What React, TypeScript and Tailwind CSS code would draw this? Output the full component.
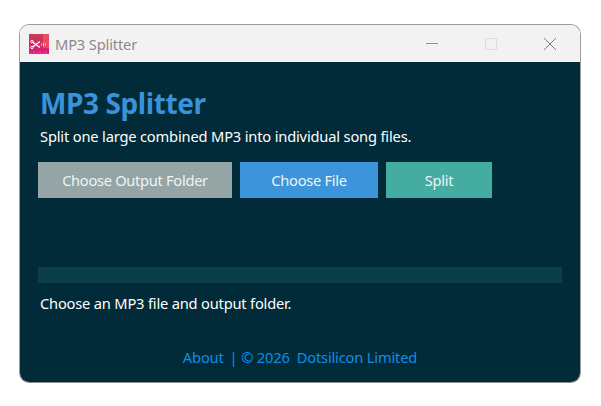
import React from 'react';

const AppIcon: React.FC = () => (
  <svg width="20" height="20" viewBox="0 0 20 20" className="shrink-0">
    <defs>
      <linearGradient id="iconBg" x1="0" y1="0" x2="0" y2="1">
        <stop offset="0" stopColor="#c43f55" />
        <stop offset="1" stopColor="#e2167a" />
      </linearGradient>
    </defs>
    <rect width="20" height="20" fill="url(#iconBg)" />
    <rect x="14" width="6" height="14" fill="#ff5f5f" opacity="0.6" />
    <path d="M3.5 8L11 13.5M3.5 13L11 7.5" stroke="#fff" strokeWidth="1.2" fill="none" />
    <circle cx="3" cy="7.5" r="1.2" fill="none" stroke="#fff" strokeWidth="1" />
    <circle cx="3" cy="13.5" r="1.2" fill="none" stroke="#fff" strokeWidth="1" />
    <path d="M12.5 9.5v2M14.5 8.5v4M16.5 9.5v2" stroke="#f7c9d6" strokeWidth="1" />
    <path d="M2 20v-2M5 20v-3M8 20v-2M11 20v-3M14 20v-2M17 20v-3" stroke="#f2559c" strokeWidth="1" />
  </svg>
);

const TitleBar: React.FC = () => (
  <div className="flex h-[37px] items-center bg-[#f2f2f2] pl-[9px] text-[#8a8a8a]">
    <AppIcon />
    <span className="ml-[6px] text-[14.67px] tracking-[-0.15px]">MP3 Splitter</span>
    <div className="ml-auto flex items-center pr-[23px]">
      <span className="h-px w-[12px] bg-[#8f8f8f]" />
      <span className="ml-[47px] h-[12px] w-[12px] rounded-[1px] border border-[#dcdcdc]" />
      <svg width="14" height="14" viewBox="0 0 14 14" className="ml-[46px]">
        <path d="M1 1l12 12M13 1L1 13" stroke="#7d7d7d" strokeWidth="1" />
      </svg>
    </div>
  </div>
);

export default function App() {
  return (
    <div className="min-h-[406px] bg-white pl-[19px] pr-[20px] pt-[24px] font-['Noto_Sans','Open_Sans',sans-serif]">
      <div className="flex h-[359px] w-[562px] flex-col overflow-hidden rounded-[10px] border border-[#9d9d9d] border-b-[#8f8f8f]">
        <TitleBar />
        <div className="flex flex-1 flex-col bg-[#012b39] px-[18px] text-white">
          <h1 className="mt-[23px] ml-[2px] text-[28px] font-bold leading-[36px] tracking-[-0.4px] text-[#3a92d9]">
            MP3 Splitter
          </h1>
          <p className="mt-[5px] ml-[2px] text-[14.67px] leading-[20px] tracking-[-0.17px]">
            Split one large combined MP3 into individual song files.
          </p>
          <div className="mt-[16px] flex gap-2 text-[14.67px] tracking-[-0.3px] text-[#ecf4f4]">
            <button className="h-[36px] w-[194px] bg-[#95a5a6]">Choose Output Folder</button>
            <button className="h-[36px] w-[138px] bg-[#3c94da]">Choose File</button>
            <button className="h-[36px] w-[106px] bg-[#45aca2]">Split</button>
          </div>
          <div className="mt-[69px] h-[16px] w-[524px] bg-[#0a3e4b]" />
          <p className="mt-[10px] ml-[2px] text-[14.67px] leading-[20px] tracking-[-0.19px]">
            Choose an MP3 file and output folder.
          </p>
          <p className="mt-[34px] text-center text-[14.67px] leading-[20px] tracking-[-0.17px] text-[#0a90e6]">
            <span>About</span>
            <span className="ml-[6px]">| © 2026</span>
            <span className="ml-[7px]">Dotsilicon Limited</span>
          </p>
        </div>
      </div>
    </div>
  );
}
